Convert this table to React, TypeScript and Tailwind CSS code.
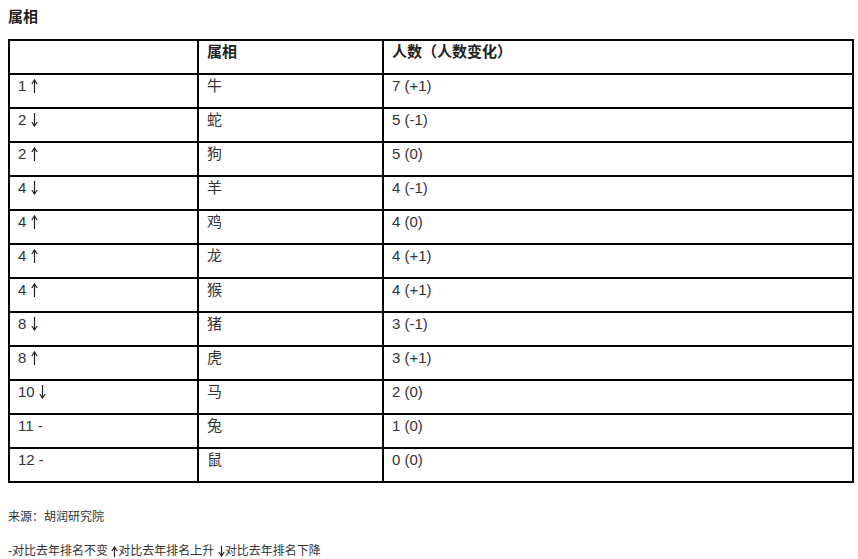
const rows: [string, string, string, string][] = [
  ['1', 'up', '牛', '7 (+1)'],
  ['2', 'down', '蛇', '5 (-1)'],
  ['2', 'up', '狗', '5 (0)'],
  ['4', 'down', '羊', '4 (-1)'],
  ['4', 'up', '鸡', '4 (0)'],
  ['4', 'up', '龙', '4 (+1)'],
  ['4', 'up', '猴', '4 (+1)'],
  ['8', 'down', '猪', '3 (-1)'],
  ['8', 'up', '虎', '3 (+1)'],
  ['10', 'down', '马', '2 (0)'],
  ['11', '-', '兔', '1 (0)'],
  ['12', '-', '鼠', '0 (0)'],
];

// thin arrow glyph, as in the source page's font
function Arrow({ dir, h = 14 }: { dir: string; h?: number }) {
  return (
    <svg
      width={7}
      height={h}
      viewBox={`0 0 7 ${h}`}
      className="inline-block align-[-2px]"
      fill="none"
      stroke="#222"
      strokeWidth={1.2}
    >
      {dir === 'up' ? (
        <>
          <path d={`M3.5 1V${h}`} />
          <path d="M0.8 5L3.5 1L6.2 5" />
        </>
      ) : (
        <>
          <path d={`M3.5 0V${h - 1}`} />
          <path d={`M0.8 ${h - 5}L3.5 ${h - 1}L6.2 ${h - 5}`} />
        </>
      )}
    </svg>
  );
}

export default function App() {
  return (
    <div
      className="bg-white text-[#333] px-2 pt-[6px] w-[858px] h-[559px]"
      style={{ fontFamily: '"Liberation Sans", "Noto Sans CJK SC", sans-serif' }}
    >
      <h2 className="text-[15px] font-bold leading-[22px] text-[#222]">属相</h2>
      <table className="mt-[11px] w-[846px] border-collapse border-2 border-black text-[15px]">
        <colgroup>
          <col className="w-[189px]" />
          <col className="w-[185px]" />
          <col />
        </colgroup>
        <thead>
          <tr className="h-[34px]">
            <th className="border-2 border-black" />
            <th className="border-2 border-black px-2 align-top text-left font-bold leading-[22px] text-[#222]">
              属相
            </th>
            <th className="border-2 border-black px-2 align-top text-left font-bold leading-[22px] text-[#222]">
              人数（人数变化）
            </th>
          </tr>
        </thead>
        <tbody>
          {rows.map(([rank, arrow, sign, count], i) => (
            <tr key={i} className="h-[34px]">
              <td className="border-2 border-black px-2 align-top leading-[22px]">
                {rank}{' '}
                {arrow === '-' ? '-' : <Arrow dir={arrow} />}
              </td>
              <td className="border-2 border-black px-2 align-top leading-[22px]">{sign}</td>
              <td className="border-2 border-black px-2 align-top leading-[22px]">{count}</td>
            </tr>
          ))}
        </tbody>
      </table>
      <p className="mt-[25px] text-[12px] leading-[18px]">来源：胡润研究院</p>
      <p className="mt-[16px] text-[12px] leading-[18px]">
        -对比去年排名不变 <Arrow dir="up" h={11} />对比去年排名上升 <Arrow dir="down" h={11} />
        对比去年排名下降
      </p>
    </div>
  );
}
